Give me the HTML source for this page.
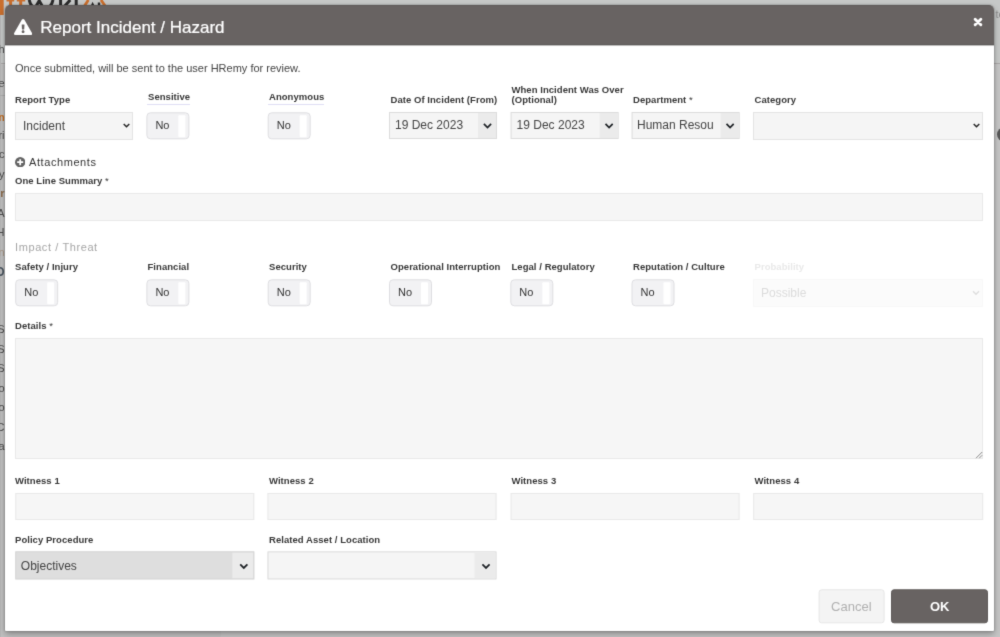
<!DOCTYPE html>
<html>
<head>
<meta charset="utf-8">
<title>Report Incident / Hazard</title>
<style>
*{box-sizing:border-box;margin:0;padding:0}
html,body{width:1000px;height:637px;overflow:hidden}
html{background:#c5c5c5}
body{filter:url(#bl)}
body{font-family:"Liberation Sans",sans-serif;background:#c5c5c5;position:relative;color:#444}
#pgh{position:absolute;left:0;top:0;width:1000px;height:64px;background:#c6c8c7;border-bottom:1px solid #aaa7a7}
#side{position:absolute;left:0;top:65px;width:221px;height:572px;background:#c0c0c0}
#lstrip{position:absolute;left:0;top:5px;width:1.200px;height:632px;background:#b6b6b6}
#lfrag{position:absolute;left:0;top:0;width:5px;height:637px;overflow:hidden;will-change:transform}
#lfrag span{position:absolute;right:.5px;font-size:11px;line-height:13px;color:#4c4c4c;white-space:nowrap}
#modal{position:absolute;left:5px;top:5px;width:989.300px;height:625.600px;background:#fff;border-radius:5px 5px 1px 1px;box-shadow:0 0 2px rgba(0,0,0,.38),0 3px 6px rgba(0,0,0,.3)}
#hdr{position:absolute;left:5px;top:5px;width:989.300px;height:40px;background:#686362;border-bottom:1px solid #5d5958;border-top:1px solid #5f5b5a;border-radius:5px 5px 0 0}
#hdr2{position:absolute;left:5px;top:45px;width:989.300px;height:1px;background:rgba(93,89,88,.4)}
#title{position:absolute;left:40.3px;top:18px;font-size:17px;color:#fff;-webkit-text-stroke:.22px #fff;white-space:nowrap;line-height:20px}
#g{position:absolute;left:0;top:0;width:1000px;height:637px;will-change:transform}
.t{position:absolute;white-space:nowrap}
.lbl{position:absolute;font-size:9.500px;font-weight:bold;letter-spacing:.05px;color:#383838;white-space:nowrap;line-height:10px}
.lbl.dot{border-bottom:1px solid #e0def4;padding-bottom:2px;padding-left:1px;margin-left:-1px}
.lbl.dis{color:#e9e9e9}
.sel{position:absolute;height:28px;background:#f5f5f5;border:1px solid #e4e4e4;font-size:12px;color:#444;line-height:26px;white-space:nowrap;overflow:hidden;padding-left:7px}
.sel svg{position:absolute;right:2.500px;top:10.300px;z-index:2}
.sel.split{height:27px;line-height:25px;border-color:#dcdcdc}
.sel.split:after{content:"";position:absolute;right:0;top:0;width:18px;height:100%;background:#ebebeb}
.sel.split svg{right:4.500px;top:10.300px}
.sel.big{height:28px;line-height:28px}
.sel.big:after{width:20.600px}
.sel.big svg{right:5.500px;top:11.200px}
.tog{position:absolute;left:0;top:0;width:42.600px;height:27.400px;background:#f2f2f4;border:1px solid #dedee1;border-radius:4px;font-size:11px;color:#333;line-height:24.500px;padding-left:8px}
.tog i{position:absolute;right:2.800px;top:1.600px;width:6.700px;height:22.400px;background:#fff;border-radius:1px}
.inp{position:absolute;height:27px;background:#f6f6f6;border:1px solid #e9e9e9}
</style>
</head>
<body>
<svg width="0" height="0" style="position:absolute"><filter id="bl" x="0" y="0" width="100%" height="100%" color-interpolation-filters="sRGB"><feConvolveMatrix order="3" kernelMatrix="0.0133 0.0888 0.0133 0.0888 0.5917 0.0888 0.0133 0.0888 0.0133" divisor="1" edgeMode="duplicate" preserveAlpha="true"/></filter></svg>
<div id="pgh"></div><div id="side"></div><div id="lstrip"></div>
<svg style="position:absolute;left:0;top:0" width="112" height="18" viewBox="0 0 112 18">
<g fill="none" stroke="#c96f2e"><path stroke-width="3.800" d="M1.800 0V15"/><path stroke-width="3" d="M10.600 0V7M20.700 0V7"/></g>
<g fill="none" stroke="#c96f2e" stroke-width="2.200"><path d="M6.500 0.500H14.200M16.800 0.500H25.200"/></g>
<g fill="none" stroke="#2b2b2b" stroke-width="3"><path d="M29.200 0Q29.800 3.200 32 6M36.200 6L39.200 0.800L42.200 6M53 0Q52.400 3.200 50.200 6"/><path d="M60.600 0V6M70.200 0L64.800 6M76.200 0V6"/></g>
<g fill="none" stroke="#c96f2e" stroke-width="2.800"><path d="M88.400 0L84.400 6M101 0L105.200 6"/></g>
<g fill="#2b2b2b"><path d="M90.600 6L92.600 1.800L94.600 6zM97.800 6V2.500H100.200V6z"/></g>
</svg>
<div id="lfrag">
<span style="top:43px">h</span><span style="top:76.500px">e</span><span style="top:111px;color:#c06c22;font-weight:bold;font-size:10px">n</span><span style="top:128.500px">ri</span><span style="top:148px">c</span><span style="top:167.500px">y</span><span style="top:187px;color:#8a6a4a;font-weight:bold">r</span>
<span style="top:206.600px">A</span><span style="top:226px">H</span><span style="top:245.600px;color:#a89684">n</span><span style="top:266px;font-weight:bold;color:#4a5560;font-size:12px">O</span>
<span style="top:323.400px">S</span><span style="top:343px">S</span><span style="top:362.300px">S</span><span style="top:381.800px">o</span><span style="top:401.300px">o</span><span style="top:420.800px">C</span><span style="top:440.300px">a</span>
</div>
<div style="position:absolute;left:0;top:95px;width:5px;height:1px;background:#adadad"></div>
<div style="position:absolute;left:995.500px;top:7px;font-size:11px;line-height:14px;color:#8e8e8e;white-space:nowrap">te</div>
<div style="position:absolute;left:997px;top:126.500px;width:15px;height:15px;border-radius:50%;background:#585858"></div>
<div id="modal"></div>
<div id="hdr"></div><div id="hdr2"></div>
<svg style="position:absolute;left:14.300px;top:19px" width="18.200" height="16.200" viewBox="0 0 576 512"><path fill="#fff" d="M569.5 440C588 472 564.800 512 527.900 512H48.100c-36.900 0-60-40.100-41.600-72L246.400 24c18.500-32 64.700-32 83.200 0l239.900 416zM288 354c-25.400 0-46 20.600-46 46s20.600 46 46 46 46-20.600 46-46-20.600-46-46-46zm-43.700-165.300l7.400 136c.3 6.400 5.600 11.300 12 11.300h48.500c6.400 0 11.600-5 12-11.300l7.400-136c.4-6.900-5.100-12.700-12-12.700h-63.400c-6.900 0-12.400 5.800-12 12.700z"/></svg>
<div id="title">Report Incident / Hazard</div>
<svg style="position:absolute;left:971.600px;top:16.250px" width="12" height="12" viewBox="0 0 12 12"><path d="M3.150 3.200L8.850 8.800M8.850 3.200L3.150 8.800" stroke="#fff" stroke-width="2.900" stroke-linecap="round"/></svg>

<div id="g">
<div class="t" style="left:15px;top:62px;font-size:11px;line-height:13px;color:#444">Once submitted, will be sent to the user HRemy for review.</div>

<!-- row 1 -->
<div class="lbl" style="left:15px;top:95px">Report Type</div>
<div class="lbl dot" style="left:148px;top:92px">Sensitive</div>
<div class="lbl dot" style="left:269px;top:92px">Anonymous</div>
<div class="lbl" style="left:390.500px;top:95px">Date Of Incident (From)</div>
<div class="lbl" style="left:511.500px;top:85px">When Incident Was Over<br>(Optional)</div>
<div class="lbl" style="left:633px;top:95px">Department <span style="font-weight:normal">*</span></div>
<div class="lbl" style="left:754.500px;top:95px">Category</div>

<div class="sel" style="left:15px;top:112px;width:118px">Incident<svg width="7" height="5" viewBox="0 0 7 5"><path d="M0.700 0.900L3.500 3.700L6.300 0.900" fill="none" stroke="#222" stroke-width="1.400"/></svg></div>
<div class="tog" style="transform:translate(146.4px,112.3px)">No<i></i></div>
<div class="tog" style="transform:translate(267.7px,112.3px)">No<i></i></div>
<div class="sel split" style="left:389px;top:112px;width:108px;padding-left:5px">19 Dec 2023<svg width="9" height="6" viewBox="0 0 9 6"><path d="M0.900 0.900L4.500 4.500L8.100 0.900" fill="none" stroke="#1e2226" stroke-width="1.750"/></svg></div>
<div class="sel split" style="left:510px;top:112px;width:108px;padding-left:5px;transform:translateX(.6px)">19 Dec 2023<svg width="9" height="6" viewBox="0 0 9 6"><path d="M0.900 0.900L4.500 4.500L8.100 0.900" fill="none" stroke="#1e2226" stroke-width="1.750"/></svg></div>
<div class="sel split" style="left:631px;top:112px;width:108.400px;padding-left:4.400px;transform:translateX(.6px)">Human Resou<svg width="9" height="6" viewBox="0 0 9 6"><path d="M0.900 0.900L4.500 4.500L8.100 0.900" fill="none" stroke="#1e2226" stroke-width="1.750"/></svg></div>
<div class="sel" style="left:753px;top:112px;width:230px"><svg width="7" height="5" viewBox="0 0 7 5"><path d="M0.700 0.900L3.500 3.700L6.300 0.900" fill="none" stroke="#222" stroke-width="1.400"/></svg></div>

<!-- attachments -->
<svg style="position:absolute;left:15px;top:156.800px" width="10.400" height="10.400" viewBox="0 0 20 20"><circle cx="10" cy="10" r="10" fill="#646464"/><path d="M10 4.200V15.800M4.200 10H15.800" stroke="#fff" stroke-width="3.400"/></svg>
<div class="t" style="left:29px;top:155px;font-size:11px;line-height:14px;color:#333;letter-spacing:.58px">Attachments</div>
<div class="lbl" style="left:15px;top:177px;transform:translateY(-.6px)">One Line Summary <span style="font-weight:normal">*</span></div>
<div class="inp" style="left:15px;top:193px;width:968px;height:27.700px"></div>

<div class="t" style="left:15px;top:240px;font-size:11px;line-height:14px;color:#a6a6a6;letter-spacing:.6px">Impact / Threat</div>
<div class="lbl" style="left:15px;top:262px">Safety / Injury</div>
<div class="lbl" style="left:147.500px;top:262px">Financial</div>
<div class="lbl" style="left:269px;top:262px">Security</div>
<div class="lbl" style="left:390.500px;top:262px">Operational Interruption</div>
<div class="lbl" style="left:511.500px;top:262px">Legal / Regulatory</div>
<div class="lbl" style="left:633px;top:262px">Reputation / Culture</div>
<div class="lbl dis" style="left:754.500px;top:262px">Probability</div>

<div class="tog" style="transform:translate(15.2px,279.3px)">No<i></i></div>
<div class="tog" style="transform:translate(146.4px,279.3px)">No<i></i></div>
<div class="tog" style="transform:translate(267.7px,279.3px)">No<i></i></div>
<div class="tog" style="transform:translate(389.0px,279.3px)">No<i></i></div>
<div class="tog" style="transform:translate(510.3px,279.3px)">No<i></i></div>
<div class="tog" style="transform:translate(631.5px,279.3px)">No<i></i></div>
<div class="sel" style="left:753px;top:279px;width:230px;background:#fbfbfb;border-color:#f8f8f8;color:#dcdcdc;padding-left:7px">Possible<svg width="8" height="6" viewBox="0 0 8 6"><path d="M1 1.200L4 4.200L7 1.200" fill="none" stroke="#dedede" stroke-width="1.400"/></svg></div>

<div class="lbl" style="left:15px;top:321px">Details <span style="font-weight:normal">*</span></div>
<div class="inp" style="left:15px;top:338px;width:968px;height:121px"></div>
<svg style="position:absolute;left:974.500px;top:451px" width="8" height="8" viewBox="0 0 8 8"><path d="M1 7.200L7.200 1M4.200 7.200L7.200 4.200" stroke="#8a8a8a" stroke-width="1" fill="none"/></svg>

<div class="lbl" style="left:15px;top:476px">Witness 1</div>
<div class="lbl" style="left:269px;top:476px">Witness 2</div>
<div class="lbl" style="left:511.500px;top:476px">Witness 3</div>
<div class="lbl" style="left:754.500px;top:476px">Witness 4</div>
<div class="inp" style="left:15px;top:493px;width:239px;transform:translateX(.3px)"></div>
<div class="inp" style="left:267px;top:493px;width:229px;transform:translateX(.5px)"></div>
<div class="inp" style="left:510px;top:493px;width:229px;transform:translateX(.6px)"></div>
<div class="inp" style="left:753px;top:493px;width:230px;transform:translateX(.2px)"></div>

<div class="lbl" style="left:15px;top:535px">Policy Procedure</div>
<div class="lbl" style="left:269px;top:535px">Related Asset / Location</div>
<div class="sel split big" style="left:15px;top:551px;width:239px;transform:translate(.3px,.4px);background:#dedede;border-color:#d6d6d6;padding-left:4.500px">Objectives<svg width="9" height="6" viewBox="0 0 9 6"><path d="M0.900 0.900L4.500 4.500L8.100 0.900" fill="none" stroke="#1e2226" stroke-width="1.750"/></svg></div>
<div class="sel split big" style="left:267px;top:551px;width:229px;transform:translate(.5px,.4px)"><svg width="9" height="6" viewBox="0 0 9 6"><path d="M0.900 0.900L4.500 4.500L8.100 0.900" fill="none" stroke="#1e2226" stroke-width="1.750"/></svg></div>

<div class="t" style="left:818px;top:589px;width:65.500px;height:34px;transform:translate(.6px,.3px);background:#f4f4f4;border:1px solid #e6e6e6;border-radius:3px;font-size:13px;line-height:33.500px;text-align:center;color:#b0b0b0">Cancel</div>
<div class="t" style="left:891px;top:589px;width:97.400px;height:34px;transform:translate(0,.3px);background:#686362;border-radius:3px;border:1px solid #5e5a59;font-size:13px;font-weight:bold;line-height:33.500px;text-align:center;color:#fff">OK</div>
</div>
</body>
</html>
